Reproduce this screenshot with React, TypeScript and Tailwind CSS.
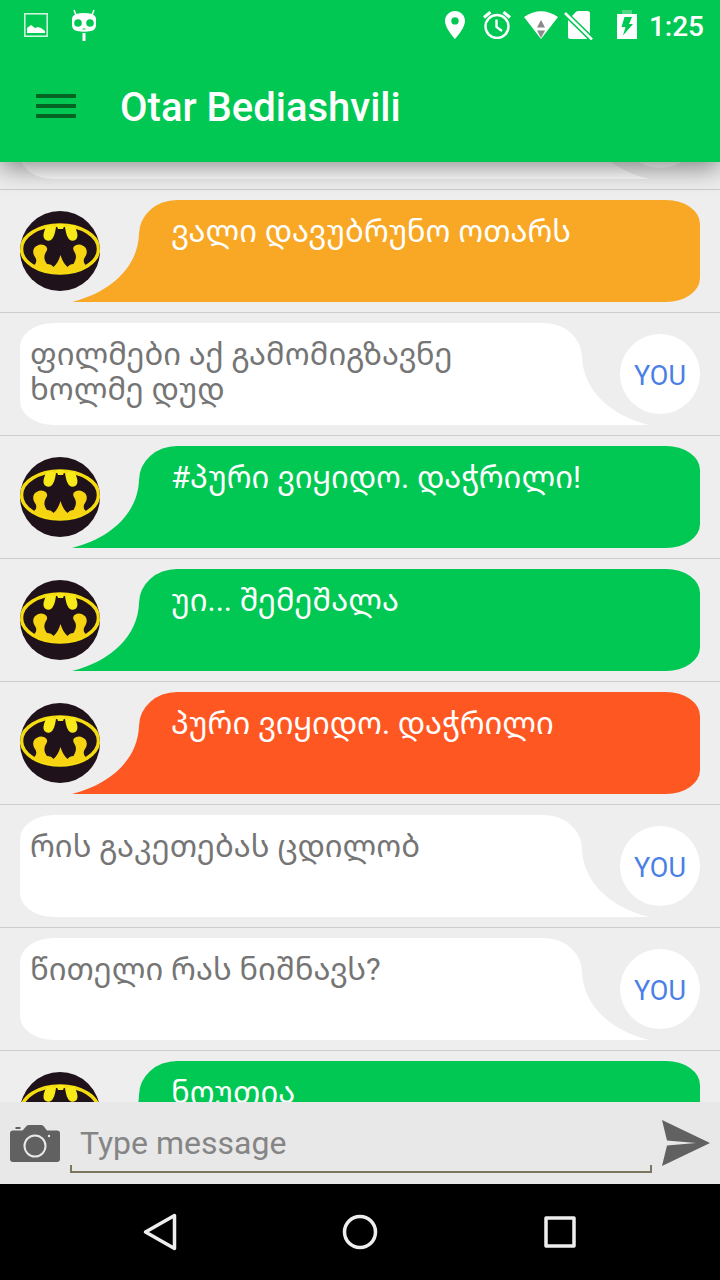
import React, { useLayoutEffect, useRef } from 'react';

type Message = {
  id: number;
  mine: boolean;
  text: string;
  tone?: 'amber' | 'green' | 'red';
};

const messages: Message[] = [
  { id: 1, mine: true, text: '' },
  { id: 2, mine: false, text: 'ვალი დავუბრუნო ოთარს', tone: 'amber' },
  { id: 3, mine: true, text: 'ფილმები აქ გამომიგზავნე\nხოლმე დუდ' },
  { id: 4, mine: false, text: '#პური ვიყიდო. დაჭრილი!', tone: 'green' },
  { id: 5, mine: false, text: 'უი... შემეშალა', tone: 'green' },
  { id: 6, mine: false, text: 'პური ვიყიდო. დაჭრილი', tone: 'red' },
  { id: 7, mine: true, text: 'რის გაკეთებას ცდილობ' },
  { id: 8, mine: true, text: 'წითელი რას ნიშნავს?' },
  { id: 9, mine: false, text: 'ნოუთია', tone: 'green' },
];

const tones = {
  amber: { bg: 'bg-[#f9a825]', tail: 'text-[#f9a825]' },
  green: { bg: 'bg-[#00c853]', tail: 'text-[#00c853]' },
  red: { bg: 'bg-[#ff5722]', tail: 'text-[#ff5722]' },
};

const StatusBar: React.FC = () => (
  <div className="flex h-[50px] items-center justify-between pl-6 pr-4 text-white">
    <div className="flex items-center gap-6">
      <svg className="h-6 w-6" viewBox="0 0 24 24" fill="none">
        <rect x="0.8" y="0.8" width="22.4" height="22.4" stroke="currentColor" strokeWidth="1.5" opacity="0.85" />
        <path d="M3 20v-5l4-3 4 3 3-1 3 1 4 3v2z" fill="currentColor" />
      </svg>
      <svg className="h-8 w-6" viewBox="0 0 24 32" fill="none">
        <path d="M2 1l2 5M22 1l-2 5" stroke="currentColor" strokeWidth="1.5" />
        <path
          fillRule="evenodd"
          fill="currentColor"
          d="M4 5Q12 3 20 5q4 1.5 4 5v6q0 5-5 6-7 1.500-14 0-5-1-5-6v-6q0-3.500 4-5zM6 10.200a3.800 3.800 0 1 0 0 7.600 3.800 3.800 0 0 0 0-7.600zM18 10.200a3.800 3.800 0 1 0 0 7.600 3.800 3.800 0 0 0 0-7.600zM10.500 19.500h3v1h-3z"
        />
        <path d="M10.500 24h3v8h-3z" fill="currentColor" />
      </svg>
    </div>
    <div className="flex items-center">
      <svg className="mr-4 h-7 w-6" viewBox="0 0 24 28" fill="currentColor">
        <path fillRule="evenodd" d="M12 0C6.500 0 2 4.400 2 10c0 7.300 10 18 10 18s10-10.700 10-18C22 4.400 17.500 0 12 0zm0 6.200a3.700 3.700 0 1 1 0 7.400 3.700 3.700 0 0 1 0-7.400z" />
      </svg>
      <svg className="mr-3 h-7 w-7" viewBox="0 0 28 28" fill="none" stroke="currentColor" strokeWidth="2.400">
        <circle cx="14" cy="15.500" r="11.500" />
        <path d="M13.500 8.500v7.500l5.500 4" />
        <path d="M1 6.500L7.500 1M27 6.500L20.500 1" strokeWidth="3" />
      </svg>
      <svg className="mr-1 h-7 w-9" viewBox="0 0 36 28">
        <path d="M1 6Q18-5.500 35 6L18 28z" fill="currentColor" />
        <path d="M18 9l4 7.500h-8zM14 19.500h8L18 27z" fill="#8a8a8a" />
      </svg>
      <svg className="mr-6 h-[30px] w-[30px]" viewBox="0 0 30 30">
        <path d="M5 10L24 28.500Q23.500 29 22.500 29H7.500Q5 29 5 26.500zM9 6L13 1.800Q14 1 15.500 1H24.500Q27 1 27 3.500V23.500z" fill="currentColor" />
        <path d="M2 3L29 29.500" stroke="currentColor" strokeWidth="2.500" />
      </svg>
      <svg className="mr-3 h-[30px] w-5" viewBox="0 0 20 30">
        <path d="M5 0h10v4H5z" fill="currentColor" opacity="0.300" />
        <path d="M0 4h20v25H0z" fill="currentColor" />
        <path d="M7.500 7H15l-3 7h4L6 25.500 8.500 17H4.500z" fill="#00c853" />
      </svg>
      <span className="pt-1 text-[28px] font-medium leading-8">1:25</span>
    </div>
  </div>
);

const BatAvatar: React.FC = () => (
  <svg className="h-20 w-20 shrink-0" viewBox="0 0 80 80" role="img" aria-label="Otar Bediashvili">
    <clipPath id="avatar-clip">
      <circle cx="40" cy="40" r="40" />
    </clipPath>
    <g clipPath="url(#avatar-clip)">
      <rect width="80" height="80" fill="#20121a" />
      <ellipse cx="40" cy="38" rx="38.500" ry="24" fill="#20121a" stroke="#f5dc10" strokeWidth="3.500" />
      <path d="M27 14C25 18 21.500 25 25 28.500 31 32.500 34.500 27 36 16ZM54 14C56 18 59.500 25 56 28.500 50 32.500 46.500 27 45 16Z" fill="#f8ea18" />
      <path d="M36 13L38 18H43L45 13Z" fill="#f8ea18" />
      <path d="M21 33.500C13 34.500 11.500 41 15 46 17 49 17 52 13 55Q40 69 67 55C63 52 63 49 65 46 68.500 41 67 34.500 59 33.500 53 34 52 38 54.500 41 57 45 56 49 53.500 53 51 53 49 54 47.500 56 44 53 42 49 40.500 44 39 49 37 53 33.500 56 32 54 30 53 27 53 24 49 23.500 45 26 41 28.500 38 27 34 21 33.500Z" fill="#f7d412" />
    </g>
  </svg>
);

const Tail: React.FC<{ className: string }> = ({ className }) => (
  <svg className={`h-[102px] w-[68px] shrink-0 -mr-px ${className}`} viewBox="0 0 68 102" aria-hidden="true">
    <path d="M67 34C66 66 40 92 0 102H68V34Z" fill="currentColor" />
  </svg>
);

const MessageRow: React.FC<{ message: Message }> = ({ message }) => {
  if (message.mine) {
    return (
      <li className="flex items-center justify-between border-b border-[#cccccc] px-5 py-[10px]">
        <div className="-mr-7 flex flex-1 flex-row-reverse">
          <Tail className="-ml-px -scale-x-100 text-white" />
          <p className="min-h-[102px] flex-1 whitespace-pre-line rounded-[34px_38px_0_34px/24px_34px_0_24px] bg-white px-[10px] pt-[14px] text-[31px] leading-[35px] text-[#757575]">
            {message.text}
          </p>
        </div>
        <div className="flex h-20 w-20 shrink-0 items-center justify-center rounded-full bg-white pt-1 text-[27px] text-[#4a7fe5]">
          YOU
        </div>
      </li>
    );
  }

  const tone = tones[message.tone ?? 'green'];
  return (
    <li className="flex items-center border-b border-[#cccccc] px-5 py-[10px]">
      <BatAvatar />
      <Tail className={`-ml-7 ${tone.tail}`} />
      <p className={`min-h-[102px] flex-1 whitespace-pre-line rounded-[38px_34px_34px_0/34px_24px_24px_0] pl-8 pr-[10px] pt-[14px] text-[31px] leading-[35px] text-white ${tone.bg}`}>
        {message.text}
      </p>
    </li>
  );
};

const App: React.FC = () => {
  const listRef = useRef<HTMLUListElement>(null);

  useLayoutEffect(() => {
    if (listRef.current) listRef.current.scrollTop = 95;
  }, []);

  return (
    <div className="flex h-screen flex-col bg-[#eeeeee] font-[Roboto,'Noto_Sans_Georgian','DejaVu_Sans',sans-serif]">
      <header className="z-10 bg-[#00c853] shadow-[0_6px_24px_rgba(0,0,0,0.45)]">
        <StatusBar />
        <div className="flex h-28 items-center gap-11 px-9">
          <button type="button" aria-label="Open menu" className="flex w-10 flex-col gap-[6px]">
            <span className="h-1 bg-[#046424]" />
            <span className="h-1 bg-[#046424]" />
            <span className="h-1 bg-[#046424]" />
          </button>
          <h1 className="pt-1 text-[40px] font-medium leading-[48px] text-white">Otar Bediashvili</h1>
        </div>
      </header>

      <ul ref={listRef} className="min-h-0 flex-1 overflow-y-auto [scrollbar-width:none]">
        {messages.map(message => (
          <MessageRow key={message.id} message={message} />
        ))}
      </ul>

      <form className="flex h-[82px] shrink-0 items-center gap-[10px] bg-[#e8e8e8] px-[10px]" onSubmit={e => e.preventDefault()}>
        <button type="button" aria-label="Take a photo" className="pt-[2px]">
          <svg className="h-[38px] w-[50px]" viewBox="0 0 50 38">
            <path d="M5.500 2h5v2h-5z" fill="#616161" />
            <path d="M13 5l3.500-4Q17.500 0 19 0H31Q32.500 0 33.500 1L37 5.500H47Q50 5.500 50 8.500V34Q50 37 47 37H3Q0 37 0 34V8.500Q0 5.500 3 5.500H11Q12.500 5.500 13 5z" fill="#616161" />
            <circle cx="25" cy="21" r="10.500" fill="none" stroke="#e8e8e8" strokeWidth="2" />
            <circle cx="39" cy="11" r="1.200" fill="#e8e8e8" />
          </svg>
        </button>
        <div className="flex min-w-0 flex-1 flex-col pt-2">
          <input
            type="text"
            aria-label="Message"
            placeholder="Type message"
            className="h-11 w-full bg-transparent px-[10px] text-[32px] text-[#616161] outline-none placeholder:text-[#858585]"
          />
          <div className="h-2 border-x-2 border-b-2 border-[#7d775f]" />
        </div>
        <button type="submit" aria-label="Send">
          <svg className="h-12 w-12" viewBox="0 0 48 48" fill="#616161">
            <path d="M0 1L48 24 0 47 5 26.500 34 24 5 21.500z" />
          </svg>
        </button>
      </form>

      <nav className="flex h-24 shrink-0 items-center justify-center gap-40 bg-black text-[#eeeeee]">
        <button type="button" aria-label="Back">
          <svg className="h-10 w-10" viewBox="0 0 40 40" fill="none" stroke="currentColor" strokeWidth="3.500" strokeLinejoin="round">
            <path d="M34.500 3.500V36.500L5.500 20z" />
          </svg>
        </button>
        <button type="button" aria-label="Home">
          <svg className="h-10 w-10" viewBox="0 0 40 40" fill="none" stroke="currentColor" strokeWidth="3.500">
            <circle cx="20" cy="20" r="15.500" />
          </svg>
        </button>
        <button type="button" aria-label="Recent apps">
          <svg className="h-10 w-10" viewBox="0 0 40 40" fill="none" stroke="currentColor" strokeWidth="3.500" strokeLinejoin="round">
            <path d="M6 6H34V34H6z" />
          </svg>
        </button>
      </nav>
    </div>
  );
};

export default App;
